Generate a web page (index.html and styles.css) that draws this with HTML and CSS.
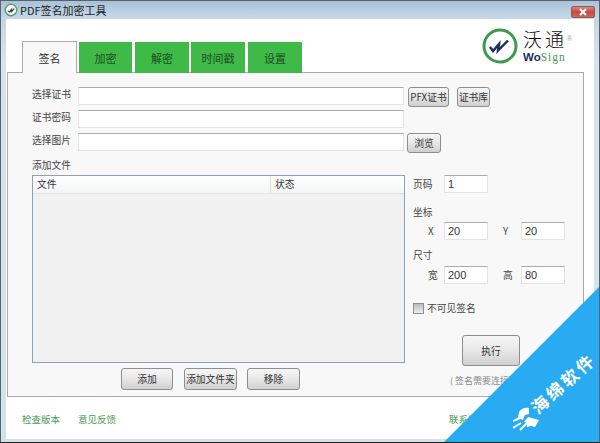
FILE: index.html
```html
<!DOCTYPE html>
<html lang="zh-CN">
<head>
    <meta charset="UTF-8">
    <meta name="viewport" content="width=device-width, initial-scale=1.0">
    <title>PDF签名加密工具</title>
    <link rel="stylesheet" href="styles.css">
</head>
<body>
    <div class="window">
        <div class="titlebar">
            <svg class="app-icon" width="14" height="14" viewBox="0 0 14 14">
                <circle cx="7" cy="7" r="5.8" fill="#f4f7f4" stroke="#5f9a72" stroke-width="1.4"/>
                <path d="M4 8l1.5 1 2-2.4v2l2.6-3" fill="none" stroke="#33415c" stroke-width="1.3"/>
            </svg>
            <span class="title-text">PDF签名加密工具</span>
            <div class="close-btn">
                <svg width="10" height="8" viewBox="0 0 10 8"><path d="M2 1l6 6M8 1L2 7" stroke="#fff" stroke-width="2"/></svg>
            </div>
        </div>

        <div class="client">
            <div class="top">
                <div class="tabs">
                    <div class="tab active">签名</div>
                    <div class="tab tab-w1">加密</div>
                    <div class="tab tab-w2">解密</div>
                    <div class="tab tab-w3">时间戳</div>
                    <div class="tab tab-w4">设置</div>
                </div>
                <div class="logo">
                    <svg class="logo-mark" width="36" height="36" viewBox="0 0 36 36">
                        <circle cx="18" cy="18" r="16" fill="#fff" stroke="#3c9a4c" stroke-width="3"/>
                        <path d="M8 19l3 4 6-7-1 6.500 10-10" fill="none" stroke="#1c2c5c" stroke-width="2.400"/>
                    </svg>
                    <div class="logo-text">
                        <div class="logo-cn">沃通<sup class="logo-reg">®</sup></div>
                        <div class="logo-en"><b>Wo</b><span>Sign</span></div>
                    </div>
                </div>
            </div>

            <div class="panel">
                <div class="row">
                    <label class="row-label">选择证书</label>
                    <input class="field field-long" type="text">
                    <button class="btn btn-pfx">PFX证书</button>
                    <button class="btn btn-store">证书库</button>
                </div>
                <div class="row">
                    <label class="row-label">证书密码</label>
                    <input class="field field-long" type="text">
                </div>
                <div class="row row-img">
                    <label class="row-label">选择图片</label>
                    <input class="field field-long" type="text">
                    <button class="btn btn-browse">浏览</button>
                </div>

                <div class="files-title">添加文件</div>

                <div class="body">
                    <div class="files">
                        <div class="list">
                            <div class="list-head">
                                <div class="col-file">文件</div>
                                <div class="col-state">状态</div>
                            </div>
                        </div>
                        <div class="file-btns">
                            <button class="btn btn-file">添加</button>
                            <button class="btn btn-file btn-file-wide">添加文件夹</button>
                            <button class="btn btn-file btn-file-wide">移除</button>
                        </div>
                    </div>

                    <div class="side">
                        <div class="side-row">
                            <span class="side-label">页码</span>
                            <input class="field field-num" type="text" value="1">
                        </div>
                        <div class="side-title side-title-pos">坐标</div>
                        <div class="side-row">
                            <span class="side-label side-label-sub">X</span>
                            <input class="field field-num" type="text" value="20">
                            <span class="side-label-2">Y</span>
                            <input class="field field-num" type="text" value="20">
                        </div>
                        <div class="side-title side-title-size">尺寸</div>
                        <div class="side-row">
                            <span class="side-label side-label-sub">宽</span>
                            <input class="field field-num" type="text" value="200">
                            <span class="side-label-2">高</span>
                            <input class="field field-num" type="text" value="80">
                        </div>
                        <label class="check">
                            <span class="check-box"></span>
                            <span>不可见签名</span>
                        </label>
                        <button class="btn btn-run">执行</button>
                        <div class="note">( 签名需要连接网络 )</div>
                    </div>
                </div>
            </div>

            <div class="footer">
                <a class="link">检查版本</a>
                <a class="link">意见反馈</a>
                <a class="link link-right">联系我们</a>
            </div>
        </div>

        <div class="ribbon">
            <svg class="ribbon-icon" width="28" height="26" viewBox="0 0 28 26">
                <path d="M16 3C11 2 8 4 6 7L5 13l5 2 2-5 4-1z" fill="#fff"/>
                <path d="M15 12l11 3-4 7-4-1-4 1v-4l-3-1z" fill="#fff"/>
                <path d="M0 16l7-3M0 23l8-5M7 25l7-7" stroke="#fff" stroke-width="2" fill="none"/>
            </svg>
            <div class="ribbon-text">海绵软件</div>
        </div>
    </div>
</body>
</html>
```

FILE: styles.css
```css
html, body {
    margin: 0;
    padding: 0;
    width: 600px;
    height: 443px;
    overflow: hidden;
}
body {
    font-family: 'Noto Sans CJK SC', 'Liberation Sans', sans-serif;
    font-size: 9.75px;
    color: #333;
}
.window {
    position: relative;
    width: 600px;
    height: 443px;
    box-sizing: border-box;
    background: linear-gradient(#bcd0e2, #d5e4ef 60px, #cfe4ea);
    border: 1px solid #59626a;
    border-bottom: 1px solid #222;
    overflow: hidden;
}

/* title bar */
.titlebar {
    height: 18px;
    display: flex;
    align-items: center;
    padding-left: 3px;
    background: linear-gradient(#a9c2d9, #c6d9e9);
}
.app-icon {
    margin-right: 2px;
}
.title-text {
    font-size: 11px;
    color: #222;
}
.close-btn {
    margin-left: auto;
    margin-right: 4px;
    margin-top: 3px;
    width: 24px;
    height: 12px;
    display: flex;
    align-items: center;
    justify-content: center;
    background: linear-gradient(#d78a80, #c4493f 50%, #cd6a5f);
    border: 1px solid #8d5a55;
    border-radius: 2px;
    box-sizing: border-box;
}

/* client area */
.client {
    margin: 0 5px;
    height: 420px;
    background: #fff;
}
.top {
    height: 53px;
    display: flex;
    justify-content: space-between;
    align-items: flex-end;
}
.tabs {
    display: flex;
    align-items: flex-end;
    gap: 2px;
    margin-left: 16px;
    margin-bottom: -1px;
    position: relative;
}
.tab {
    width: 54px;
    height: 31px;
    box-sizing: border-box;
    display: flex;
    align-items: center;
    justify-content: center;
    font-size: 11px;
    color: #1c4d1c;
    background: #3fba49;
}
.tab.active {
    width: 55px;
    height: 32px;
    color: #333;
    background: #f8f8f8;
    border: 1px solid #aaa;
    border-bottom: none;
}
.tab-w1 {
    width: 53px;
}
.tab-w2, .tab-w4 {
    margin-left: 1px;
}

/* logo */
.logo {
    display: flex;
    align-self: flex-start;
    margin-top: 9px;
    margin-right: 20px;
}
.logo-mark {
    margin-right: 5px;
}
.logo-text {
    width: 51px;
}
.logo-cn {
    font-family: 'Liberation Sans', 'Noto Sans CJK SC', sans-serif;
    font-size: 19px;
    line-height: 26px;
    letter-spacing: 3px;
    color: #111;
    font-weight: 300;
    white-space: nowrap;
}
.logo-reg {
    font-size: 7px;
    line-height: 0;
    letter-spacing: 0;
    color: #999;
    vertical-align: 6px;
}
.logo-en {
    margin-top: -4px;
    font-size: 11.500px;
    line-height: 12px;
    white-space: nowrap;
}
.logo-en b {
    font-family: 'Liberation Sans', sans-serif;
    color: #1c2c5c;
}
.logo-en span {
    font-family: 'Liberation Serif', serif;
    color: #3f9a55;
    letter-spacing: 1px;
}

/* main panel */
.panel {
    margin-left: 1px;
    width: 577px;
    height: 325px;
    box-sizing: border-box;
    padding: 14px 0 0 24px;
    background: #f8f8f8;
    border: 1px solid #aaa;
}
.row {
    display: flex;
    align-items: flex-start;
    height: 17px;
    margin-bottom: 6px;
}
.row-img {
    margin-top: 1px;
}
.row-label {
    width: 46px;
    line-height: 15px;
    color: #444;
}
.field {
    box-sizing: border-box;
    height: 18px;
    border: 1px solid #e3e3e3;
    border-top-color: #ababab;
    background: #fff;
    padding: 0 3px;
    font-family: 'Liberation Sans', sans-serif;
    font-size: 11px;
    color: #333;
    outline: none;
}
.field-long {
    width: 326px;
}
.field-num {
    width: 44px;
}
.btn {
    box-sizing: border-box;
    padding: 0;
    font-family: 'Noto Sans CJK SC', 'Liberation Sans', sans-serif;
    font-size: 9.75px;
    color: #333;
    white-space: nowrap;
    background: linear-gradient(#f6f6f6, #e9e9e9 45%, #cfcfcf);
    border: 1px solid #8e8e8e;
    border-radius: 3px;
}
.btn-pfx {
    width: 41px;
    height: 20px;
    margin-left: 4px;
}
.btn-store {
    width: 33px;
    height: 20px;
    margin-left: 8px;
}
.btn-browse {
    width: 34px;
    height: 20px;
    margin-left: 3px;
}
.files-title {
    margin-top: 9px;
    height: 16px;
    line-height: 13px;
    color: #444;
}

/* file list */
.body {
    display: flex;
}
.files {
    width: 373px;
}
.list {
    box-sizing: border-box;
    height: 188px;
    background: #f1f1f1;
    border: 1px solid #8ca1b3;
}
.list-head {
    display: flex;
    height: 17px;
    line-height: 17px;
    background: linear-gradient(#fff, #f4f5f6);
    border-bottom: 1px solid #e2e3e4;
}
.col-file {
    width: 233px;
    padding-left: 4px;
    border-right: 1px solid #dcdcdc;
}
.col-state {
    padding-left: 4px;
}
.file-btns {
    display: flex;
    gap: 11px;
    margin-top: 5px;
    padding-left: 89px;
}
.btn-file {
    width: 52px;
    height: 22px;
}
.btn-file-wide {
    width: 53px;
}
.btn-file-wide:last-child {
    margin-left: -1px;
}

/* right column */
.side {
    margin-left: 8px;
}
.side-row {
    display: flex;
    align-items: center;
    height: 18px;
}
.side-label {
    width: 31px;
    color: #444;
}
.side-label-sub {
    box-sizing: border-box;
    padding-left: 15px;
}
.side-label-2 {
    width: 33px;
    box-sizing: border-box;
    padding-left: 15px;
    color: #444;
}
.side-title {
    height: 15px;
    line-height: 13px;
    color: #444;
}
.side-title-pos {
    margin-top: 13px;
    margin-bottom: 1px;
}
.side-title-size {
    margin-top: 9px;
    margin-bottom: 2px;
}
.check {
    display: flex;
    align-items: center;
    gap: 3px;
    margin-top: 18px;
    height: 12px;
    color: #444;
}
.check-box {
    box-sizing: border-box;
    width: 11px;
    height: 11px;
    background: linear-gradient(#bbb, #eee);
    border: 1px solid #8f8f8f;
}
.btn-run {
    display: block;
    width: 58px;
    height: 31px;
    margin: 21px 0 0 49px;
}
.note {
    margin: 8px 0 0 37px;
    line-height: 13px;
    font-size: 9px;
    color: #888;
    white-space: nowrap;
}

/* footer */
.footer {
    display: flex;
    gap: 18px;
    padding: 15px 0 0 16px;
}
.link {
    font-size: 9.500px;
    line-height: 14px;
    color: #4c9a57;
}
.link-right {
    margin-left: 315px;
}

/* corner ribbon */
.ribbon {
    position: absolute;
    right: -1px;
    bottom: -1px;
    width: 157px;
    height: 157px;
    background: #29abf2;
    clip-path: polygon(100% 0, 100% 100%, 0 100%);
}
.ribbon-icon {
    position: absolute;
    left: 70px;
    top: 119px;
}
.ribbon-text {
    position: absolute;
    left: 80px;
    top: 88px;
    width: 80px;
    text-align: center;
    font-size: 17px;
    line-height: 18px;
    letter-spacing: 3px;
    font-weight: 700;
    color: #fff;
    white-space: nowrap;
    transform: rotate(-42deg);
}
```
